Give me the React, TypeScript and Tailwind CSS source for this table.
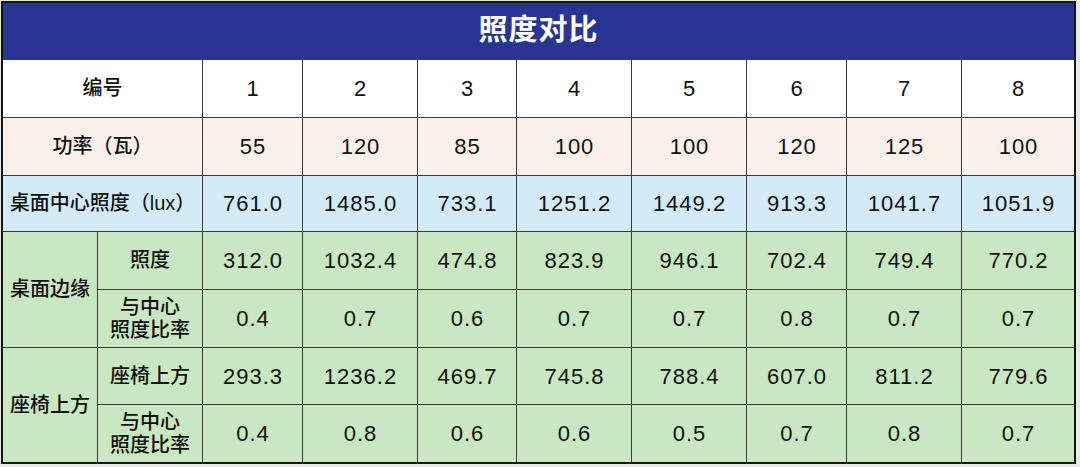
const cols = [
  ['1', '55', '761.0', '312.0', '0.4', '293.3', '0.4'],
  ['2', '120', '1485.0', '1032.4', '0.7', '1236.2', '0.8'],
  ['3', '85', '733.1', '474.8', '0.6', '469.7', '0.6'],
  ['4', '100', '1251.2', '823.9', '0.7', '745.8', '0.6'],
  ['5', '100', '1449.2', '946.1', '0.7', '788.4', '0.5'],
  ['6', '120', '913.3', '702.4', '0.8', '607.0', '0.7'],
  ['7', '125', '1041.7', '749.4', '0.7', '811.2', '0.8'],
  ['8', '100', '1051.9', '770.2', '0.7', '779.6', '0.7'],
]

const rowBg = ['bg-white', 'bg-[#faf0ea]', 'bg-[#d3ebf7]', 'bg-[#c9e7c1]', 'bg-[#c9e7c1]', 'bg-[#c9e7c1]', 'bg-[#c9e7c1]']

const cell = 'flex items-center justify-center text-center text-[#111]'
const label = cell + ' text-[20px] font-medium leading-[23px]'
const num = cell + ' text-[22px] tracking-[1px] pl-px'

export default function App() {
  return (
    <div className="w-[1080px] h-[467px] bg-[#e9e9e9] pt-px pl-px" style={{ fontFamily: '"Liberation Sans", Arial, "Noto Sans CJK SC", sans-serif' }}>
      <div className="w-[1075px] border-2 border-[#151515] bg-[#3a3a3a]">
        <div
          className="grid gap-px"
          style={{
            gridTemplateColumns: '94px 104px 99px 114px 98px 114px 114px 99px 114px 112px',
            gridTemplateRows: '56px 57px 57px 55px 57px 57px 56px 57px',
          }}
        >
          <div className="col-span-10 bg-[#283593] flex items-center justify-center text-white text-[29px] font-bold tracking-[1px]">照度对比</div>

          <div className={`${label} col-span-2 bg-white`}>编号</div>
          {cols.map((c) => <div key={'a' + c[0]} className={`${num} ${rowBg[0]}`}>{c[0]}</div>)}

          <div className={`${label} col-span-2 bg-[#faf0ea]`}>功率（瓦）</div>
          {cols.map((c) => <div key={'b' + c[0]} className={`${num} ${rowBg[1]}`}>{c[1]}</div>)}

          <div className={`${label} col-span-2 bg-[#d3ebf7]`}>桌面中心照度（lux）</div>
          {cols.map((c) => <div key={'c' + c[0]} className={`${num} ${rowBg[2]}`}>{c[2]}</div>)}

          <div className={`${label} row-span-2 bg-[#c9e7c1]`}>桌面边缘</div>
          <div className={`${label} bg-[#c9e7c1]`}>照度</div>
          {cols.map((c) => <div key={'d' + c[0]} className={`${num} ${rowBg[3]}`}>{c[3]}</div>)}
          <div className={`${label} bg-[#c9e7c1]`}>与中心<br />照度比率</div>
          {cols.map((c) => <div key={'e' + c[0]} className={`${num} ${rowBg[4]}`}>{c[4]}</div>)}

          <div className={`${label} row-span-2 bg-[#c9e7c1]`}>座椅上方</div>
          <div className={`${label} bg-[#c9e7c1]`}>座椅上方</div>
          {cols.map((c) => <div key={'f' + c[0]} className={`${num} ${rowBg[5]}`}>{c[5]}</div>)}
          <div className={`${label} bg-[#c9e7c1]`}>与中心<br />照度比率</div>
          {cols.map((c) => <div key={'g' + c[0]} className={`${num} ${rowBg[6]}`}>{c[6]}</div>)}
        </div>
      </div>
    </div>
  )
}
